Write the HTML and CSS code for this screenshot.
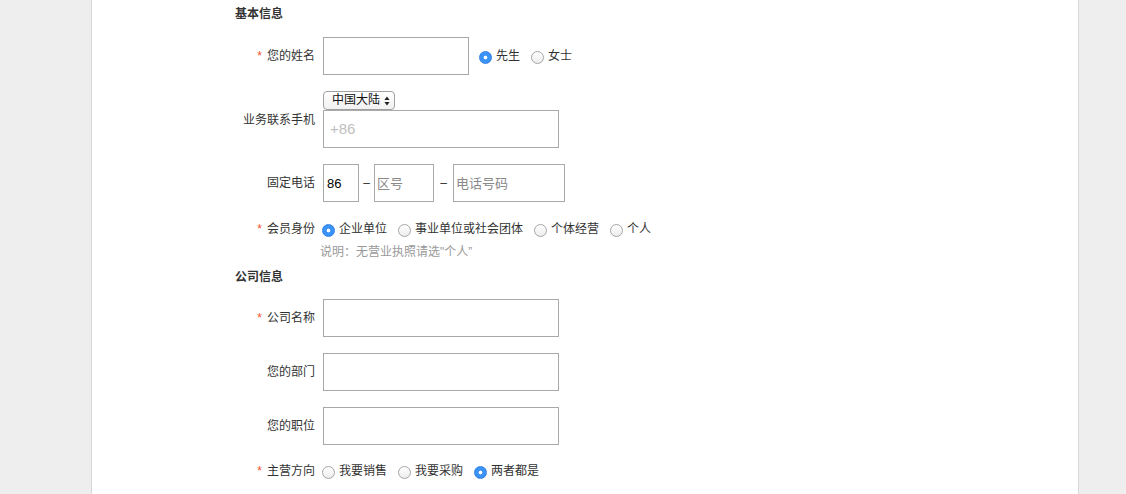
FILE: index.html
```html
<!DOCTYPE html>
<html lang="zh-CN">
<head>
    <meta charset="UTF-8">
    <meta name="viewport" content="width=device-width, initial-scale=1.0">
    <title>会员注册</title>
    <link rel="stylesheet" href="styles.css">
</head>
<body>
    <div class="page">
        <form class="reg-form">
            <h3 class="section-title">基本信息</h3>

            <div class="row">
                <label class="row-label"><span class="req">*</span>您的姓名</label>
                <div class="row-field">
                    <input type="text" class="txt txt-name">
                    <div class="radios radios-gender">
                        <label class="radio"><input type="radio" name="gender" checked>先生</label>
                        <label class="radio"><input type="radio" name="gender">女士</label>
                    </div>
                </div>
            </div>

            <div class="row">
                <label class="row-label">业务联系手机</label>
                <div class="row-field stack">
                    <span class="select-wrap">
                        <select class="sel">
                            <option>中国大陆</option>
                        </select>
                        <svg class="sel-arrow" width="6" height="10" viewBox="0 0 6 10"><path d="M3 0.5 L5.6 4 H0.4 Z M3 9.5 L5.6 6 H0.4 Z" fill="#222"/></svg>
                    </span>
                    <input type="text" class="txt txt-wide txt-mobile" placeholder="+86">
                </div>
            </div>

            <div class="row">
                <label class="row-label">固定电话</label>
                <div class="row-field">
                    <input type="text" class="txt txt-country" value="86">
                    <span class="dash">–</span>
                    <input type="text" class="txt txt-area" placeholder="区号">
                    <span class="dash dash-2">–</span>
                    <input type="text" class="txt txt-tel" placeholder="电话号码">
                </div>
            </div>

            <div class="row row-radio">
                <label class="row-label"><span class="req">*</span>会员身份</label>
                <div class="row-field radios">
                    <label class="radio"><input type="radio" name="identity" checked>企业单位</label>
                    <label class="radio"><input type="radio" name="identity">事业单位或社会团体</label>
                    <label class="radio"><input type="radio" name="identity">个体经营</label>
                    <label class="radio"><input type="radio" name="identity">个人</label>
                </div>
            </div>
            <p class="tip">说明：无营业执照请选"个人”</p>

            <h3 class="section-title section-company">公司信息</h3>

            <div class="row">
                <label class="row-label"><span class="req">*</span>公司名称</label>
                <div class="row-field"><input type="text" class="txt txt-wide"></div>
            </div>

            <div class="row">
                <label class="row-label">您的部门</label>
                <div class="row-field"><input type="text" class="txt txt-wide"></div>
            </div>

            <div class="row">
                <label class="row-label">您的职位</label>
                <div class="row-field"><input type="text" class="txt txt-wide"></div>
            </div>

            <div class="row row-radio row-last">
                <label class="row-label"><span class="req">*</span>主营方向</label>
                <div class="row-field radios">
                    <label class="radio"><input type="radio" name="trade">我要销售</label>
                    <label class="radio"><input type="radio" name="trade">我要采购</label>
                    <label class="radio"><input type="radio" name="trade" checked>两者都是</label>
                </div>
            </div>
        </form>
    </div>
</body>
</html>
```

FILE: styles.css
```css
/* Global */
body {
    margin: 0;
    padding: 0;
    background-color: #eeeeee;
    color: #333;
    font-family: "Liberation Sans", "Noto Sans CJK SC", sans-serif;
    font-size: 12px;
}

/* Page panel */
.page {
    width: 986px;
    min-height: 494px;
    margin-left: 91px;
    background: #fff;
    border-left: 1px solid #d8d8d8;
    border-right: 1px solid #d8d8d8;
    box-sizing: content-box;
}

.reg-form {
    padding: 6px 0 0 143px;
}

.section-title {
    margin: 0 0 15px;
    font-size: 12px;
    line-height: 16px;
    font-weight: bold;
}

.section-company {
    margin-top: 10px;
    margin-bottom: 14px;
}

/* Rows */
.row {
    display: flex;
    align-items: center;
    margin-bottom: 16px;
}

.row-label {
    width: 80px;
    margin-right: 8px;
    text-align: right;
    line-height: 16px;
    white-space: nowrap;
}

.req {
    color: #f0502a;
    margin-right: 5px;
}

.row-field {
    display: flex;
    align-items: center;
}

.stack {
    flex-direction: column;
    align-items: flex-start;
}

/* Text inputs */
.txt {
    height: 38px;
    box-sizing: border-box;
    border: 1px solid #a9a9a9;
    padding: 0 4px;
    margin: 0;
    font-family: inherit;
    font-size: 14px;
    color: #000;
    outline: none;
}

.txt::placeholder {
    color: #b3b3b3;
}

.txt-mobile {
    padding-left: 6px;
}

.txt-mobile::placeholder {
    font-size: 15px;
    color: #c0c0c0;
}

.txt-name { width: 146px; }
.txt-wide { width: 236px; }
.txt-country { width: 36px; padding-left: 3px; font-size: 13px; }
.txt-area { width: 60px; padding-left: 2px; }
.txt-tel { width: 112px; padding-left: 2px; }

.txt-area::placeholder,
.txt-tel::placeholder {
    color: #888;
    font-size: 13px;
}

.dash {
    width: 15px;
    text-align: center;
    color: #333;
}

.dash-2 {
    width: 19px;
}

/* Select */
.select-wrap {
    position: relative;
    display: flex;
}

.sel {
    -webkit-appearance: none;
    appearance: none;
    width: 72px;
    height: 19px;
    margin: 0;
    padding: 0 0 0 8px;
    border: 1px solid #a0a0a0;
    border-radius: 4px;
    background: linear-gradient(#ffffff, #f1f1f1);
    font-family: inherit;
    font-size: 12px;
    color: #111;
    line-height: 17px;
}

.sel-arrow {
    position: absolute;
    right: 5px;
    top: 5px;
    pointer-events: none;
}

/* Radios */
.radios {
    display: flex;
    align-items: center;
}

.radios-gender {
    margin-left: 10px;
}

.radio {
    display: flex;
    align-items: center;
    margin-right: 11px;
    line-height: 16px;
    white-space: nowrap;
}

.radio input {
    -webkit-appearance: none;
    appearance: none;
    width: 13px;
    height: 13px;
    margin: 2px 4px 0 0;
    border: 1px solid #a6a6a6;
    border-radius: 50%;
    background: linear-gradient(#ffffff, #ececec);
    box-sizing: border-box;
    position: relative;
}

.radio input:checked {
    border-color: #2f7fe8;
    background: radial-gradient(circle, #ffffff 0 1.6px, #3b94f5 2.2px);
}

.row-radio .radios {
    margin-left: -1px;
}

.row-radio {
    margin-top: 19px;
    margin-bottom: 0;
}

.tip {
    margin: 8px 0 0 85px;
    line-height: 14px;
    color: #999;
}

.row-last {
    margin-top: 18px;
}
```
